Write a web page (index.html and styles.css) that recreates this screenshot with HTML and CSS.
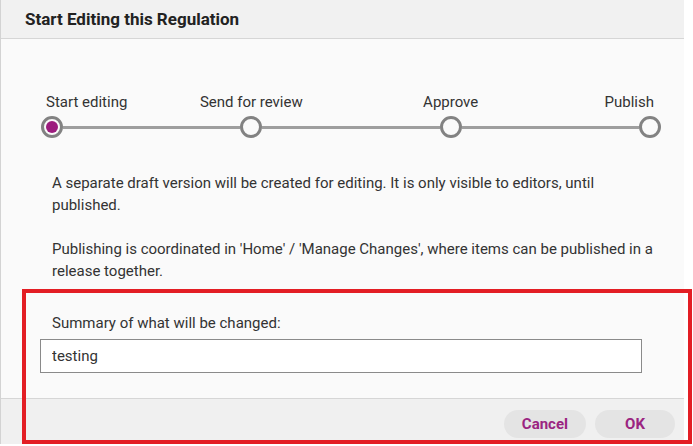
FILE: index.html
```html
<!DOCTYPE html>
<html lang="en">
<head>
<meta charset="utf-8">
<title>Start Editing this Regulation</title>
<link rel="stylesheet" href="styles.css">
</head>
<body>
<div class="dialog">
  <div class="dialog-header">
    <h1 class="dialog-title">Start Editing this Regulation</h1>
  </div>
  <div class="dialog-body">
    <div class="stepper">
      <div class="step step-first">
        <span class="step-label">Start editing</span>
        <span class="step-dot step-dot-active"></span>
      </div>
      <div class="step-line"></div>
      <div class="step">
        <span class="step-label">Send for review</span>
        <span class="step-dot"></span>
      </div>
      <div class="step-line"></div>
      <div class="step">
        <span class="step-label">Approve</span>
        <span class="step-dot"></span>
      </div>
      <div class="step-line"></div>
      <div class="step step-last">
        <span class="step-label">Publish</span>
        <span class="step-dot"></span>
      </div>
    </div>
    <p class="info">A separate draft version will be created for editing. It is only visible to editors, until published.</p>
    <p class="info">Publishing is coordinated in 'Home' / 'Manage Changes', where items can be published in a release together.</p>
    <label class="field-label" for="summary">Summary of what will be changed:</label>
    <input class="field-input" id="summary" type="text" value="testing">
  </div>
  <div class="dialog-footer">
    <button class="btn" type="button">Cancel</button>
    <button class="btn" type="button">OK</button>
  </div>
</div>
<div class="highlight"></div>
</body>
</html>
```
FILE: styles.css
```css
* { box-sizing: border-box; }

body {
  margin: 0;
  background: #ffffff;
  font-family: Roboto, "Liberation Sans", Arial, sans-serif;
  color: #333333;
}

.dialog {
  width: 684px;
  height: 444px;
  display: flex;
  flex-direction: column;
  background: #fafafa;
  border-left: 1px solid #d3d3d3;
}

.dialog-header {
  height: 39px;
  flex: none;
  display: flex;
  align-items: center;
  padding-left: 24px;
  background: #f1f1f1;
  border-bottom: 1px solid #d6d6d6;
}

.dialog-title {
  margin: 0;
  font-size: 17px;
  font-weight: 700;
  color: #222222;
}

.dialog-body {
  flex: 1;
  padding: 53px 23px 0 39px;
  display: flex;
  flex-direction: column;
}

.stepper {
  display: flex;
  margin-left: 1px;
}

.step {
  width: 22px;
  flex: none;
  display: flex;
  flex-direction: column;
  align-items: center;
  gap: 4px;
}

.step-first { align-items: flex-start; }
.step-first .step-label { margin-left: 5px; }
.step-last { align-items: flex-end; }
.step-last .step-label { margin-right: 7px; }

.step-label {
  white-space: nowrap;
  font-size: 15px;
  line-height: 20px;
  color: #333333;
}

.step-dot {
  width: 22px;
  height: 22px;
  border-radius: 50%;
  border: 3px solid #828282;
  background: #fafafa;
  display: flex;
  align-items: center;
  justify-content: center;
}

.step-dot-active::after {
  content: "";
  width: 12px;
  height: 12px;
  border-radius: 50%;
  background: #9c1d7e;
}

.step-line {
  flex: 1;
  height: 3px;
  align-self: flex-end;
  margin-bottom: 9px;
  background: #9e9e9e;
}

.info {
  margin: 34px 0 0 12px;
  font-size: 15px;
  line-height: 22px;
  color: #333333;
}

.info + .info { margin-top: 22px; }

.field-label {
  margin: 30px 0 0 12px;
  font-size: 15px;
  line-height: 22px;
  color: #333333;
}

.field-input {
  margin-top: 5px;
  width: 602px;
  height: 34px;
  padding: 0 11px;
  border: 1px solid #8a8a8a;
  background: #ffffff;
  font-family: inherit;
  font-size: 15px;
  color: #333333;
}

.dialog-footer {
  height: 46px;
  flex: none;
  display: flex;
  justify-content: flex-end;
  align-items: flex-start;
  gap: 9px;
  padding: 11px 9px 0 0;
  background: #f0f0f0;
  border-top: 1px solid #d6d6d6;
}

.btn {
  min-width: 80px;
  height: 28px;
  padding: 0 18px;
  border: none;
  border-radius: 14px;
  background: #e4e4e4;
  font-family: inherit;
  font-size: 15px;
  font-weight: 700;
  color: #9b2581;
}

.highlight {
  position: absolute;
  left: 22px;
  top: 289px;
  width: 670px;
  height: 155px;
  border: 4px solid #e31e24;
  pointer-events: none;
}
```
